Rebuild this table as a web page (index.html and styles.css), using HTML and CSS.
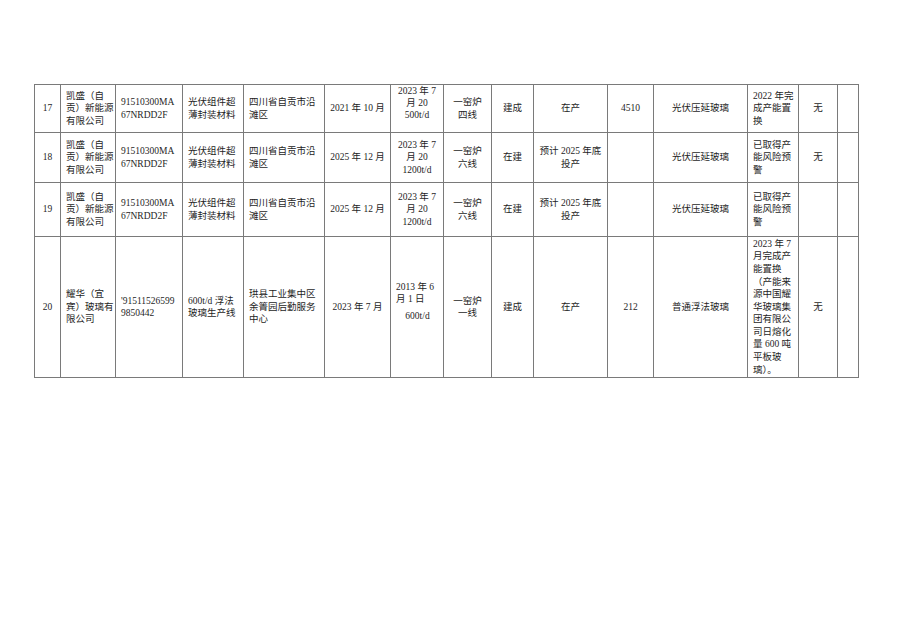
FILE: index.html
```html
<!DOCTYPE html>
<html lang="zh">
<head>
<meta charset="utf-8">
<link rel="stylesheet" href="styles.css">
</head>
<body>
<div class="page">
<table class="grid">
<colgroup>
<col class="c1"><col class="c2"><col class="c3"><col class="c4"><col class="c5"><col class="c6"><col class="c7"><col class="c8"><col class="c9"><col class="c10"><col class="c11"><col class="c12"><col class="c13"><col class="c14"><col class="c15">
</colgroup>
<tbody>
<tr class="r17">
<td class="ctr">17</td>
<td class="lft">凯盛（自<br>贡）新能源<br>有限公司</td>
<td class="lft">91510300MA<br>67NRDD2F</td>
<td class="lft">光伏组件超<br>薄封装材料</td>
<td class="lft">四川省自贡市沿<br>滩区</td>
<td class="ctr">2021 年 10 月</td>
<td class="ctr raise">2023 年 7<br>月 20<br>500t/d</td>
<td class="ctr">一窑炉<br>四线</td>
<td class="ctr">建成</td>
<td class="ctr">在产</td>
<td class="ctr">4510</td>
<td class="ctr">光伏压延玻璃</td>
<td class="lft">2022 年完<br>成产能置<br>换</td>
<td class="ctr">无</td>
<td></td>
</tr>
<tr class="r18">
<td class="ctr">18</td>
<td class="lft">凯盛（自<br>贡）新能源<br>有限公司</td>
<td class="lft">91510300MA<br>67NRDD2F</td>
<td class="lft">光伏组件超<br>薄封装材料</td>
<td class="lft">四川省自贡市沿<br>滩区</td>
<td class="ctr">2025 年 12 月</td>
<td class="ctr">2023 年 7<br>月 20<br>1200t/d</td>
<td class="ctr">一窑炉<br>六线</td>
<td class="ctr">在建</td>
<td class="ctr">预计 2025 年底<br>投产</td>
<td class="ctr"></td>
<td class="ctr">光伏压延玻璃</td>
<td class="lft">已取得产<br>能风险预<br>警</td>
<td class="ctr">无</td>
<td></td>
</tr>
<tr class="r19">
<td class="ctr">19</td>
<td class="lft">凯盛（自<br>贡）新能源<br>有限公司</td>
<td class="lft">91510300MA<br>67NRDD2F</td>
<td class="lft">光伏组件超<br>薄封装材料</td>
<td class="lft">四川省自贡市沿<br>滩区</td>
<td class="ctr">2025 年 12 月</td>
<td class="ctr">2023 年 7<br>月 20<br>1200t/d</td>
<td class="ctr">一窑炉<br>六线</td>
<td class="ctr">在建</td>
<td class="ctr">预计 2025 年底<br>投产</td>
<td class="ctr"></td>
<td class="ctr">光伏压延玻璃</td>
<td class="lft">已取得产<br>能风险预<br>警</td>
<td class="ctr"></td>
<td></td>
</tr>
<tr class="r20">
<td class="ctr">20</td>
<td class="lft">耀华（宜<br>宾）玻璃有<br>限公司</td>
<td class="lft">'91511526599<br>9850442</td>
<td class="lft">600t/d 浮法<br>玻璃生产线</td>
<td class="lft">珙县工业集中区<br>余箐园后勤服务<br>中心</td>
<td class="ctr">2023 年 7 月</td>
<td class="lft"><div>2013 年 6<br>月 1 日</div><div class="cap">600t/d</div><div class="spacer"></div></td>
<td class="ctr">一窑炉<br>一线</td>
<td class="ctr">建成</td>
<td class="ctr">在产</td>
<td class="ctr">212</td>
<td class="ctr">普通浮法玻璃</td>
<td class="lft tight">2023 年 7<br>月完成产<br>能置换<br>（产能来<br>源中国耀<br>华玻璃集<br>团有限公<br>司日熔化<br>量 600 吨<br>平板玻<br>璃）。</td>
<td class="ctr">无</td>
<td></td>
</tr>
</tbody>
</table>
</div>
</body>
</html>
```

FILE: styles.css
```css
html, body {
  margin: 0;
  padding: 0;
  background: #ffffff;
}

.page {
  padding: 84px 0 0 34px;
}

.grid {
  border-collapse: collapse;
  table-layout: fixed;
  width: 825px;
  font-family: "Liberation Serif", "Noto Sans CJK SC", serif;
  font-size: 9.5px;
  line-height: 12.5px;
  color: #1e1e1e;
}

.grid td {
  border: 1px solid #7a7a7a;
  padding: 0 4px 0 5px;
  vertical-align: middle;
  white-space: nowrap;
  overflow: visible;
}

.c1 { width: 26px; }
.c2 { width: 55px; }
.c3 { width: 67px; }
.c4 { width: 61px; }
.c5 { width: 81px; }
.c6 { width: 66px; }
.c7 { width: 53px; }
.c8 { width: 48px; }
.c9 { width: 42px; }
.c10 { width: 74px; }
.c11 { width: 46px; }
.c12 { width: 94px; }
.c13 { width: 51px; }
.c14 { width: 39px; }
.c15 { width: 21px; }

.grid td.ctr {
  text-align: center;
  padding-left: 2px;
  padding-right: 2px;
}

.grid td.lft {
  text-align: left;
}

.grid td.raise {
  vertical-align: top;
  padding-top: 0;
  line-height: 12px;
}

.grid td.tight {
  line-height: 12.6px;
}

.cap {
  text-align: center;
  margin-top: 4px;
}

.spacer {
  height: 11px;
}

.r17 td { height: 47px; }
.r18 td { height: 49px; }
.r19 td { height: 53px; }
.r20 td { height: 140px; }
```
